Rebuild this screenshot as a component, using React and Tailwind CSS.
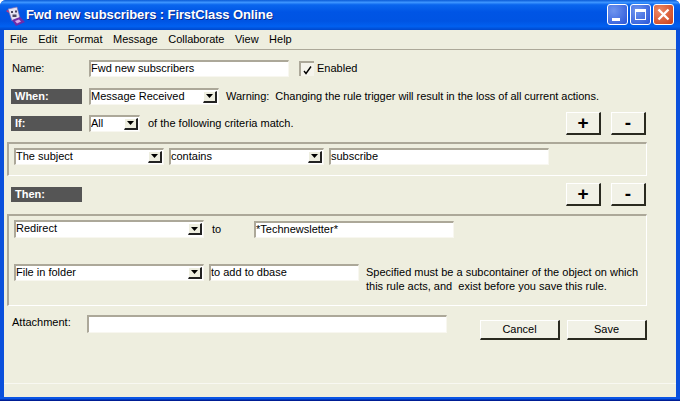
import React from "react";

function Field({ className = "", children }) {
  return (
    <div className={`box-border flex items-center bg-white border-t-2 border-l-2 border-r border-b border-t-[#aca899] border-l-[#aca899] border-r-[#f8f7f0] border-b-[#f8f7f0] pb-[1px] whitespace-nowrap overflow-hidden ${className}`}>
      {children}
    </div>
  );
}

function Arrow() {
  return (
    <div className="box-border w-[14px] h-[12px] shrink-0 flex items-center justify-center bg-[#eeeee0] border-t border-l border-white border-r-2 border-b-2 border-r-[#222] border-b-[#222]">
      <svg width="7" height="4" viewBox="0 0 7 4"><path d="M0 0h7L3.5 4z" fill="#000" /></svg>
    </div>
  );
}

function Select({ className = "", children }) {
  return (
    <Field className={`justify-between pr-[1px] pb-0 ${className}`}>
      <span className="pb-[1px]">{children}</span>
      <Arrow />
    </Field>
  );
}

function Btn({ className = "", children }) {
  return (
    <div className={`box-border flex items-center justify-center bg-[#f1f1e6] border-t border-l border-white border-r-2 border-b-2 border-r-[#2a2a20] border-b-[#2a2a20] ${className}`}>
      {children}
    </div>
  );
}

function Tag({ children, className = "" }) {
  return (
    <div className={`box-border w-[71px] h-[15px] bg-[#555555] text-white font-bold text-[11px] leading-[15px] pl-[4px] shrink-0 ${className}`}>
      {children}
    </div>
  );
}

function PlusMinus() {
  return (
    <div className="flex gap-[10px] ml-auto mr-[1px]">
      <Btn className="w-[35px] h-[23px] text-[19px] font-bold leading-none pb-[2px]">+</Btn>
      <Btn className="w-[35px] h-[23px] text-[19px] font-bold leading-none pb-[2px]">-</Btn>
    </div>
  );
}

export default function App() {
  return (
    <div className="w-[680px] h-[401px] flex flex-col overflow-hidden bg-[#0a50dc] text-black text-[11px] font-['Liberation_Sans',Arial,sans-serif] rounded-t-[6px]">
      {/* Title bar */}
      <div className="h-[30px] shrink-0 flex items-center pl-[6px] pr-[6px] bg-[linear-gradient(180deg,#0a5ad6_0%,#3d95ff_8%,#0a66ee_16%,#0055e5_40%,#0054e3_70%,#0160f0_88%,#0048cc_100%)]">
        <svg width="20" height="22" viewBox="0 0 20 22" className="shrink-0 mt-[2px]">
          <path d="M2 4l9-2 3 11-8 3z" fill="#e6e2f2" stroke="#7a6ab0" strokeWidth="0.7" />
          <path d="M5 6h2v2H5zM9 5.500h2v2H9zM6.500 9.500h4v2.500h-4z" fill="#4a4660" />
          <path d="M6 15l8-3 5 5-9 4z" fill="#6f2ba8" />
          <path d="M9 16l4-1.500 2 2-4 2z" fill="#d8a8e8" />
          <path d="M0 6l2-1 1 3z" fill="#d8306a" />
        </svg>
        <div className="text-white font-bold text-[13px] tracking-[-0.1px] [text-shadow:1px_1px_0_#0a2a8a] whitespace-nowrap">
          Fwd new subscribers : FirstClass Online
        </div>
        <div className="ml-auto flex gap-[2px] mb-[1px]">
          <div className="box-border w-[21px] h-[21px] rounded-[3px] border border-white bg-[radial-gradient(circle_at_30%_30%,#6f95ee,#2a55d8)] flex items-end pl-[4px] pb-[3px]">
            <div className="w-[8px] h-[3px] bg-white" />
          </div>
          <div className="box-border w-[21px] h-[21px] rounded-[3px] border border-white bg-[radial-gradient(circle_at_30%_30%,#6f95ee,#2a55d8)] flex items-center justify-center">
            <div className="box-border w-[11px] h-[11px] border border-white border-t-[3px]" />
          </div>
          <div className="box-border w-[21px] h-[21px] rounded-[3px] border border-white bg-[radial-gradient(circle_at_30%_30%,#ee8a66,#c93d18)] flex items-center justify-center">
            <svg width="13" height="13" viewBox="0 0 13 13"><path d="M1.500 1.500l10 10M11.500 1.500l-10 10" stroke="#fff" strokeWidth="2.400" /></svg>
          </div>
        </div>
      </div>

      {/* Client area */}
      <div className="flex-1 min-h-0 mx-[4px] bg-[#eeeedf] flex flex-col">
        {/* Menu */}
        <div className="h-[20px] shrink-0 flex items-center pl-[6px] gap-[10.5px] border-b border-b-[#aca899] pb-[1px]">
          {["File", "Edit", "Format", "Message", "Collaborate", "View", "Help"].map((m) => (
            <span key={m}>{m}</span>
          ))}
        </div>

        <div className="flex-1 flex flex-col pl-[3px] pr-[29px]">
          {/* Name */}
          <div className="flex items-center h-[17px] mt-[10px] ml-[5px]">
            <span className="w-[77px]">Name:</span>
            <Field className="w-[200px] h-[17px]">Fwd new subscribers</Field>
            <div className="box-border ml-[10px] w-[15px] h-[15px] bg-[#f5f4ec] border-t-2 border-l-2 border-t-[#aca899] border-l-[#aca899] flex items-center justify-center">
              <svg width="11" height="11" viewBox="0 0 11 11"><path d="M2 7l2 2.500L9 2.500" fill="none" stroke="#000" strokeWidth="1.400" /></svg>
            </div>
            <span className="ml-[3px]">Enabled</span>
          </div>

          {/* When */}
          <div className="flex items-center h-[17px] mt-[11px] ml-[4px]">
            <Tag>When:</Tag>
            <Select className="w-[130px] h-[17px] ml-[7px]">Message Received</Select>
            <span className="ml-[7px] tracking-[-0.04px]">Warning:&nbsp; Changing the rule trigger will result in the loss of all current actions.</span>
          </div>

          {/* If */}
          <div className="flex items-center h-[23px] mt-[7px] ml-[4px]">
            <Tag>If:</Tag>
            <Select className="w-[51px] h-[17px] ml-[7px]">All</Select>
            <span className="ml-[8px]">of the following criteria match.</span>
            <PlusMinus />
          </div>

          {/* Group 1 */}
          <div className="box-border h-[34px] mt-[7px] pl-[5px] pt-[4px] border-t-[2px] border-l-[2px] border-t-[#aca899] border-l-[#aca899] border-r border-b border-r-white border-b-white flex gap-[5px]">
            <Select className="w-[150px] h-[17px]">The subject</Select>
            <Select className="w-[155px] h-[17px]">contains</Select>
            <Field className="w-[220px] h-[17px]">subscribe</Field>
          </div>

          {/* Then */}
          <div className="flex items-center h-[23px] mt-[7px] ml-[4px]">
            <Tag>Then:</Tag>
            <PlusMinus />
          </div>

          {/* Group 2 */}
          <div className="box-border h-[92px] mt-[8px] pl-[5px] pt-[4px] border-t-[2px] border-l-[2px] border-t-[#aca899] border-l-[#aca899] border-r border-b border-r-white border-b-white flex flex-col">
            <div className="flex items-center h-[18px]">
              <Select className="w-[190px] h-[18px]">Redirect</Select>
              <span className="ml-[8px] w-[42px]">to</span>
              <Field className="w-[200px] h-[17px] mt-[1px]">*Technewsletter*</Field>
            </div>
            <div className="flex items-start mt-[26px]">
              <Select className="w-[190px] h-[17px]">File in folder</Select>
              <Field className="w-[150px] h-[17px] ml-[5px]">to add to dbase</Field>
              <div className="ml-[7px] mt-[1px] leading-[14px] whitespace-nowrap">
                Specified must be a subcontainer of the object on which<br />this rule acts, and&nbsp; exist before you save this rule.
              </div>
            </div>
          </div>

          {/* Attachment */}
          <div className="flex items-start mt-[9px] ml-[5px]">
            <span className="w-[75px] -mt-[1px]">Attachment:</span>
            <Field className="w-[360px] h-[18px]" />
            <Btn className="w-[80px] h-[20px] ml-[33px] mt-[5px]">Cancel</Btn>
            <Btn className="w-[80px] h-[20px] ml-[7px] mt-[5px]">Save</Btn>
          </div>
        </div>

        {/* Status */}
        <div className="h-[14px] shrink-0 border-t border-t-[#f8f8f2]" />
      </div>
      <div className="h-[4px] shrink-0 bg-[linear-gradient(180deg,#0a55e5_0%,#0a55e5_40%,#0030b0_70%,#001080_100%)]" />
    </div>
  );
}
